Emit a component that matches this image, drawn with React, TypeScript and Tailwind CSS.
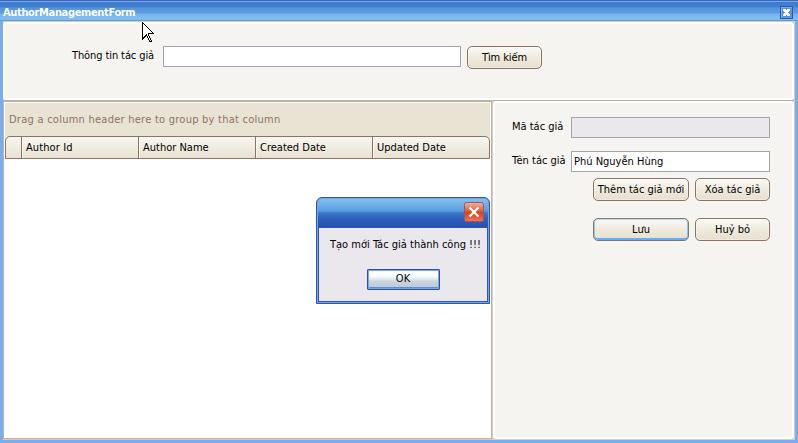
import type { ReactNode } from 'react';

const columns = [
  { label: 'Author Id', tracking: 'tracking-[0.1px]' },
  { label: 'Author Name', tracking: 'tracking-[0px]' },
  { label: 'Created Date', tracking: 'tracking-[0px]' },
  { label: 'Updated Date', tracking: 'tracking-[0px]' },
];

function FormButton({ children, className, focused = false }: { children: ReactNode; className: string; focused?: boolean }) {
  return (
    <button
      className={`flex h-[23px] shrink-0 items-center justify-center whitespace-nowrap rounded-[5px] border border-[#8b7365] bg-linear-to-b from-[#f8f7f3] from-10% via-[#eeeadd] via-50% to-[#e6e0ce] pt-px ${
        focused
          ? 'shadow-[inset_0_1px_0_#b9e0fc,inset_1px_0_0_#8dc5f8,inset_-1px_0_0_#8dc5f8,inset_0_-2px_0_#64aef5]'
          : 'shadow-[inset_0_0_0_1px_rgba(255,255,255,0.35)]'
      } ${className}`}
    >
      {children}
    </button>
  );
}

function TitleBar() {
  return (
    <header className="flex h-[21px] shrink-0 items-center justify-between border-t border-[#3a66c0] bg-[linear-gradient(to_bottom,#78a9ee_0px,#78a9ee_1px,#3f7acb_1px,#4280d0_6px,#5595dd_7px,#5c9ce2_12px,#75b4ea_13px,#80c1f0_19px,#5799e5_19px)] pl-[3px] pr-[5px]">
      <h1 className="pt-[3px] font-['DejaVu_Sans',Verdana,sans-serif] text-[11px] font-bold leading-[14px] tracking-[-0.35px] text-white">
        AuthorManagementForm
      </h1>
      <svg width="13" height="13" viewBox="0 0 13 13" className="mt-[2px]" shapeRendering="crispEdges">
        <rect x="0.5" y="0.5" width="12" height="12" rx="1" fill="#5e94dc" stroke="#2d59aa" />
        <path d="M1.5 11.5V1.5H11.5" fill="none" stroke="#80aae3" />
        <path d="M3 3h3v1h1V3h3v2H9v1H8v1h1v1h1v2H7V9H6v1H3V8h1V7h1V6H4V5H3z" fill="#fff" />
      </svg>
    </header>
  );
}

function SearchPanel() {
  return (
    <section className="flex h-[78px] shrink-0 items-start rounded-[3px] border-2 border-white bg-[#f6f4f0] pl-[67px] pt-[22px]">
      <label className="w-[91px] pt-[3px] leading-[14px] tracking-[-0.1px]">Thông tin tác giả</label>
      <input className="h-[21px] w-[298px] border border-[#a5a4aa] bg-white" />
      <FormButton className="ml-[6px] w-[75px] tracking-[-0.1px]">Tìm kiếm</FormButton>
    </section>
  );
}

function AuthorGrid() {
  return (
    <section className="flex w-[489px] shrink-0 flex-col border border-[#bdb0a4] bg-white">
      <div className="mx-px mt-px h-[33px] shrink-0 bg-[#e9e3d4] pl-[4px] pt-[10px] leading-[14px] tracking-[0.25px] text-[#8b7365]">
        Drag a column header here to group by that column
      </div>
      <div className="mx-px shrink-0 bg-[#e9e3d4]">
        <div className="flex h-[23px] overflow-hidden rounded-t-[5px] border border-[#8b7365] bg-linear-to-b from-[#f7f6f1] to-[#e8e2d1]">
          <div className="w-[16px] shrink-0 border-r border-[#8b7365]" />
          {columns.map((column) => (
            <div
              key={column.label}
              className={`w-[117px] shrink-0 border-r border-[#8b7365] pl-[4px] pt-[4px] leading-[14px] shadow-[inset_1px_0_0_#faf8f4] last:border-r-0 ${column.tracking}`}
            >
              {column.label}
            </div>
          ))}
        </div>
      </div>
    </section>
  );
}

function AuthorEditor() {
  return (
    <section className="ml-px flex min-w-0 flex-1 flex-col rounded-[3px] border-2 border-white bg-[#f6f4f0] pl-[17px] pt-[14px]">
      <div className="flex">
        <label className="w-[59px] pt-[3px] leading-[14px] whitespace-nowrap">Mã tác giả</label>
        <input disabled className="h-[21px] w-[199px] border border-[#a5a4aa] bg-[#eae8ed]" />
      </div>
      <div className="mt-[13px] flex">
        <label className="w-[59px] pt-[3px] leading-[14px] whitespace-nowrap">Tên tác giả</label>
        <input
          defaultValue="Phú Nguyễn Hùng"
          className="h-[21px] w-[199px] border border-[#a5a4aa] bg-white pl-[2px] outline-none"
        />
      </div>
      <div className="ml-[81px] mt-[6px] flex gap-[6px]">
        <FormButton className="w-[96px]">Thêm tác giả mới</FormButton>
        <FormButton className="w-[75px]">Xóa tác giả</FormButton>
      </div>
      <div className="ml-[81px] mt-[17px] flex gap-[6px]">
        <FormButton focused className="w-[96px]">Lưu</FormButton>
        <FormButton className="w-[75px]">Huỷ bỏ</FormButton>
      </div>
    </section>
  );
}

function MessageDialog() {
  return (
    <div className="absolute left-[316px] top-[197px] flex h-[107px] w-[174px] flex-col rounded-t-[6px] border border-[#2d55b4] bg-[#74a5dd] p-px">
      <div className="flex h-[28px] shrink-0 items-start justify-end rounded-t-[4px] bg-[linear-gradient(to_bottom,#84c0ef_0px,#6fb0e9_6px,#5a9ce1_12px,#3978cb_14px,#2c5fb9_20px,#2952ae_28px)] pr-[3px] pt-[3px]">
        <svg width="21" height="21" viewBox="0 0 21 21">
          <defs>
            <linearGradient id="close-fill" x2="0" y2="1">
              <stop stopColor="#eeb5a2" />
              <stop offset=".4" stopColor="#dc6b48" />
              <stop offset=".55" stopColor="#d64318" />
              <stop offset="1" stopColor="#ed7760" />
            </linearGradient>
          </defs>
          <rect x=".5" y=".5" width="19" height="19" rx="2" fill="url(#close-fill)" stroke="#9f5465" />
          <path d="M5.5 5.5l9 9M14.5 5.5l-9 9" stroke="#fff" strokeWidth="2.2" />
        </svg>
      </div>
      <div className="flex flex-1 flex-col items-center border border-[#2d55b4] bg-[#eae8ed]">
        <p className="mt-[10px] whitespace-nowrap pl-[5px] leading-[14px]">Tạo mới Tác giả thành công !!!</p>
        <button className="mt-[17px] flex h-[21px] w-[73px] items-center justify-center rounded-[1px] border border-[#2952ad] bg-[linear-gradient(to_bottom,#ffffff_0%,#f8fafb_35%,#cbd5df_60%,#b8c7d8_100%)] shadow-[inset_0_0_0_1px_#78a7df,inset_0_-2px_0_#5b8fd1]">
          OK
        </button>
      </div>
    </div>
  );
}

function Pointer() {
  return (
    <svg
      className="absolute left-[142px] top-[22px]"
      width="12"
      height="21"
      viewBox="0 0 12 21"
      shapeRendering="crispEdges"
    >
      <path
        d="M0 0h1v1h1v1h1v1h1v1h1v1h1v1h1v1h1v1h1v1h1v1h1v1h1v1H7v2h1v2h1v2h1v2H7v-2H6v-2H5v-2H4v1H3v1H2v1H1v1H0z"
        fill="#000"
      />
      <path d="M1 2h1v1h1v1h1v1h1v1h1v1h1v1h1v1h1v1h1v1H6v3h1v2h1v2h1v1H8v-1H7v-2H6v-2H5v-2H4v1H3v1H2v1H1z" fill="#fff" />
    </svg>
  );
}

export default function App() {
  return (
    <main className="relative flex h-[443px] w-[798px] flex-col overflow-hidden bg-[#78aef0] font-['DejaVu_Sans_Condensed','DejaVu_Sans',Tahoma,sans-serif] text-[11px] font-stretch-condensed text-black">
      <TitleBar />
      <div className="flex min-h-0 flex-1 flex-col border-x-[3px] border-b-[3px] border-[#78aef0] shadow-[inset_1px_0_0_#5b98e9]">
        <div className="flex min-h-0 flex-1 flex-col border-r border-t border-[#d8cdbf] bg-[#d8cdbf]">
          <SearchPanel />
          <div className="flex min-h-0 flex-1 border-t border-[#bdb0a4] pb-px">
            <AuthorGrid />
            <AuthorEditor />
          </div>
        </div>
      </div>
      <MessageDialog />
      <Pointer />
    </main>
  );
}
